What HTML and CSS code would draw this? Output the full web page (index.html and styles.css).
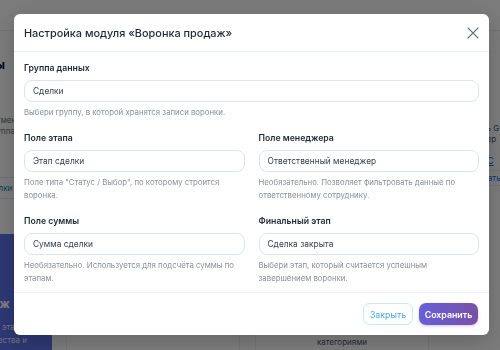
FILE: index.html
```html
<!DOCTYPE html>
<html lang="ru">
<head>
<meta charset="utf-8">
<title>Настройка модуля</title>
<link rel="stylesheet" href="styles.css">
</head>
<body>
<div class="page">
  <div class="topbar"></div>
  <div class="main">
    <div class="side">
      <div class="side-top">
        <div class="side-title">Отчёты</div>
        <p class="side-text">Сводная по сегментам</p>
        <p class="side-text">и записи по группам</p>
        <div class="side-btn">Сделки</div>
      </div>
      <div class="side-panel">
        <div class="panel-title">Воронка продаж</div>
        <p class="panel-text">Конверсия по этапам</p>
        <p class="panel-text">количества и</p>
      </div>
    </div>
    <div class="center">
      <div class="cards">
        <div class="card"></div>
        <div class="card"><span class="card-text">категориями</span></div>
      </div>
    </div>
    <div class="aside">
      <p class="aside-text">Подключись G</p>
      <p class="aside-text">менеджер</p>
      <p class="aside-link">С</p>
      <div class="aside-row">Выбрать</div>
    </div>
  </div>
</div>

<div class="overlay">
  <div class="modal">
    <div class="modal-header">
      <h2 class="modal-title">Настройка модуля «Воронка продаж»</h2>
      <button class="close-btn" aria-label="Закрыть">
        <svg width="12" height="12" viewBox="0 0 12 12"><path d="M1 1 L11 11 M11 1 L1 11" stroke="#6b7280" stroke-width="1.1" fill="none" stroke-linecap="round"/></svg>
      </button>
    </div>
    <div class="modal-body">
      <div class="field field-wide">
        <label class="field-label">Группа данных</label>
        <div class="field-input">Сделки</div>
        <p class="field-hint">Выбери группу, в которой хранятся записи воронки.</p>
      </div>
      <div class="field">
        <label class="field-label">Поле этапа</label>
        <div class="field-input">Этап сделки</div>
        <p class="field-hint">Поле типа "Статус / Выбор", по которому строится воронка.</p>
      </div>
      <div class="field">
        <label class="field-label">Поле менеджера</label>
        <div class="field-input">Ответственный менеджер</div>
        <p class="field-hint">Необязательно. Позволяет фильтровать данные по ответственному сотруднику.</p>
      </div>
      <div class="field">
        <label class="field-label">Поле суммы</label>
        <div class="field-input">Сумма сделки</div>
        <p class="field-hint">Необязательно. Используется для подсчёта суммы по этапам.</p>
      </div>
      <div class="field">
        <label class="field-label">Финальный этап</label>
        <div class="field-input">Сделка закрыта</div>
        <p class="field-hint">Выбери этап, который считается успешным завершением воронки.</p>
      </div>
    </div>
    <div class="modal-footer">
      <button class="btn btn-ghost">Закрыть</button>
      <button class="btn btn-primary">Сохранить</button>
    </div>
  </div>
</div>
</body>
</html>
```

FILE: styles.css
```css
* { box-sizing: border-box; }
html, body { margin: 0; padding: 0; }
body {
  width: 500px;
  height: 350px;
  overflow: hidden;
  font-family: Inter, "Noto Sans", "DejaVu Sans", sans-serif;
  background: #f6f6f6;
}
p { margin: 0; }

/* backdrop page */
.page {
  width: 500px;
  height: 350px;
  display: flex;
  flex-direction: column;
  overflow: hidden;
}
.topbar {
  height: 31px;
  flex: none;
  border-bottom: 1px solid #e4e7ec;
  background: #f7f7f7;
}
.main {
  flex: 1;
  display: flex;
  min-height: 0;
}
.side {
  width: 52px;
  flex: none;
  display: flex;
  flex-direction: column;
  overflow: hidden;
}
.side-top {
  height: 203px;
  flex: none;
  padding-top: 26px;
}
.side-title {
  margin-left: -145px;
  width: 150px;
  text-align: right;
  font-size: 12px;
  line-height: 16px;
  font-weight: 700;
  color: #111827;
  white-space: nowrap;
}
.side-text {
  margin-left: -60px;
  font-size: 8px;
  line-height: 11px;
  color: #6b7280;
  white-space: nowrap;
}
.side-title + .side-text { margin-top: 42px; }
.side-btn {
  margin-left: -30px;
  margin-top: 40px;
  width: 70px;
  height: 22px;
  border: 1px solid #d6e4f0;
  border-radius: 11px;
  font-size: 8px;
  line-height: 20px;
  padding-left: 12px;
  color: #1f77b4;
  white-space: nowrap;
}
.side-panel {
  flex: 1;
  background: #5b6fe6;
  color: #ffffff;
  padding-top: 62px;
}
.panel-title {
  margin-left: -140px;
  width: 150px;
  text-align: right;
  font-size: 12px;
  line-height: 16px;
  font-weight: 700;
  white-space: nowrap;
}
.panel-text {
  margin-left: -120px;
  width: 150px;
  text-align: right;
  font-size: 8px;
  line-height: 13px;
  color: #dfe5ff;
  white-space: nowrap;
}
.panel-title + .panel-text { margin-top: 9px; }
.panel-text + .panel-text { margin-left: -123px; }
.center {
  flex: 1;
  display: flex;
  flex-direction: column;
  justify-content: flex-end;
  padding-left: 14px;
}
.cards {
  display: flex;
  gap: 15px;
  height: 20px;
}
.card {
  width: 174px;
  border: 1px solid #e6e8ec;
  border-bottom: none;
  background: #f8f8f8;
  text-align: center;
  font-size: 8px;
  color: #4b5563;
  padding-top: 6px;
}
.card-text { display: inline-block; }
.aside {
  width: 72px;
  flex: none;
  padding-left: 58px;
  padding-top: 92px;
  overflow: hidden;
}
.aside-text {
  font-size: 8px;
  line-height: 11px;
  color: #4b5563;
  white-space: nowrap;
  margin-left: -46px;
}
.aside-text + .aside-text { margin-left: -32px; }
.aside-link {
  margin-top: 10px;
  font-size: 9px;
  color: #2563eb;
  text-decoration: underline;
  white-space: nowrap;
  padding-bottom: 4px;
  border-bottom: 1px solid #e4e7ec;
}
.aside-row {
  margin-left: -20px;
  font-size: 8px;
  line-height: 14px;
  color: #2563eb;
  white-space: nowrap;
  border-bottom: 1px solid #e4e7ec;
}

/* overlay + modal */
.overlay {
  position: fixed;
  inset: 0;
  background: rgba(0, 0, 0, 0.5);
  display: flex;
  align-items: flex-start;
  justify-content: flex-start;
  padding: 14px 0 0 14px;
}
.modal {
  width: 475px;
  height: 321px;
  background: #ffffff;
  border-radius: 6px;
  box-shadow: 0 6px 20px rgba(0, 0, 0, 0.18);
  display: flex;
  flex-direction: column;
  overflow: hidden;
}
.modal-header {
  height: 38px;
  flex: none;
  display: flex;
  align-items: center;
  justify-content: space-between;
  padding: 0 9px 0 10px;
  border-bottom: 1px solid #e9eef7;
}
.modal-title {
  margin: 0;
  font-size: 10.9px;
  font-weight: 500;
  color: #1f2937;
}
.close-btn {
  width: 14px;
  height: 14px;
  padding: 0;
  border: none;
  background: none;
  display: flex;
  align-items: center;
  justify-content: center;
}
.modal-body {
  flex: 1;
  display: grid;
  grid-template-columns: 1fr 1fr;
  column-gap: 14px;
  row-gap: 12px;
  align-content: start;
  padding: 9px 10px 0 10px;
}
.field-wide { grid-column: 1 / -1; }
.field-label {
  display: block;
  font-size: 8.7px;
  line-height: 14px;
  font-weight: 600;
  color: #1f2937;
  margin-bottom: 5px;
}
.field-input {
  height: 22px;
  border: 1px solid #dbe3f4;
  border-radius: 8px;
  padding: 0 8px;
  font-size: 8.4px;
  line-height: 20px;
  color: #374151;
  background: #ffffff;
}
.field-hint {
  margin-top: 4px;
  font-size: 7.8px;
  line-height: 13px;
  color: #8a9099;
}
.modal-footer {
  height: 43px;
  flex: none;
  display: flex;
  align-items: center;
  justify-content: flex-end;
  gap: 6px;
  padding: 0 11px;
  border-top: 1px solid #eef2f8;
}
.btn {
  height: 22px;
  border-radius: 7px;
  font-family: inherit;
  font-size: 8.8px;
  padding: 0;
  cursor: pointer;
}
.btn-ghost {
  width: 50px;
  background: #ffffff;
  border: 1px solid #cbe7fa;
  color: #4aa9ea;
}
.btn-primary {
  width: 59px;
  border: none;
  color: #ffffff;
  font-weight: 600;
  background: linear-gradient(90deg, #6660d8, #7a4fa6);
  box-shadow: 0 1px 3px rgba(90, 70, 170, 0.3);
}
```
